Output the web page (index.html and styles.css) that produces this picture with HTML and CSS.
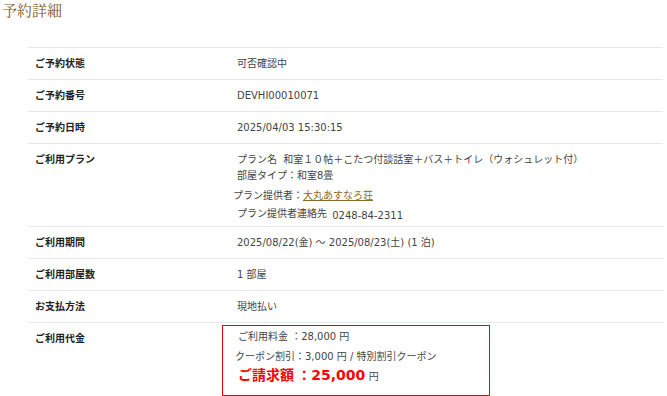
FILE: index.html
```html
<!DOCTYPE html>
<html lang="ja">
<head>
<meta charset="utf-8">
<link rel="stylesheet" href="styles.css">
</head>
<body>
<h1 class="title">予約詳細</h1>
<table class="detail">
  <tr><th>ご予約状態</th><td>可否確認中</td></tr>
  <tr><th>ご予約番号</th><td>DEVHI00010071</td></tr>
  <tr><th>ご予約日時</th><td>2025/04/03 15:30:15</td></tr>
  <tr class="plan-row"><th>ご利用プラン</th><td>
    <div class="plan-main">
      <div>プラン名&nbsp; 和室１０帖＋こたつ付談話室＋バス＋トイレ（ウォシュレット付）</div>
      <div>部屋タイプ：和室8畳</div>
    </div>
    <div class="provider">
      <div class="prov-name">プラン提供者：<a href="#" class="link">大丸あすなろ荘</a></div>
      <div class="prov-tel">プラン提供者連絡先 <span class="tel">0248-84-2311</span></div>
    </div>
  </td></tr>
  <tr><th>ご利用期間</th><td>2025/08/22(金) ～ 2025/08/23(土) (1 泊)</td></tr>
  <tr><th>ご利用部屋数</th><td>1 部屋</td></tr>
  <tr><th>お支払方法</th><td>現地払い</td></tr>
  <tr class="price-row"><th>ご利用代金</th><td>
    <div class="price-box">
      <div class="p1">ご利用料金 ：28,000 円</div>
      <div class="p2">クーポン割引：3,000 円 / 特別割引クーポン</div>
      <div class="p3"><span class="total-label">ご請求額 ：</span><span class="total">25,000</span> <span class="yen">円</span></div>
    </div>
  </td></tr>
</table>
</body>
</html>
```
FILE: styles.css
```css
html, body {
  margin: 0;
  padding: 0;
  background: #fff;
}
body {
  font-family: "DejaVu Sans", "Noto Sans CJK JP", sans-serif;
  font-size: 10px;
  color: #444;
}
.title {
  margin: 0 0 0 2px;
  font-family: "Noto Serif CJK JP", "Liberation Serif", "Noto Sans CJK JP", serif;
  font-weight: normal;
  font-size: 15px;
  line-height: 20px;
  color: #7d5a1c;
}
.detail {
  margin: 27px 0 0 28px;
  width: 635px;
  border-collapse: collapse;
}
.detail tr {
  border-top: 1px solid #e8e8e8;
}
.detail th, .detail td {
  padding: 8px 0 7px 7px;
  line-height: 16px;
  vertical-align: top;
  text-align: left;
}
.detail th {
  width: 187px;
  font-weight: bold;
  color: #222;
}
.detail td {
  padding-left: 15px;
}
.plan-row td {
  padding-bottom: 3px;
}
.provider {
  margin-top: 4px;
}
.prov-name {
  margin-left: -4px;
  line-height: 16px;
}
.prov-tel {
  line-height: 19px;
}
.tel {
  position: relative;
  top: 2px;
  margin-left: 2px;
}
.link {
  color: #8b6a2e;
  text-decoration: underline;
}
.price-row td {
  padding: 2px 0 0 0;
}
.price-box {
  border: 1px solid #e60012;
  padding: 3px 0 9px 15px;
  box-sizing: border-box;
  width: 268px;
}
.p1 {
  line-height: 16px;
}
.p2 {
  margin-top: 4px;
  margin-left: -3px;
  line-height: 16px;
}
.p3 {
  line-height: 19px;
  color: #f00;
  font-weight: bold;
}
.total-label {
  font-family: "Noto Sans CJK JP", sans-serif;
  font-size: 14px;
}
.total {
  font-size: 14px;
}
.yen {
  font-weight: normal;
  color: #444;
  font-size: 10px;
}
```
